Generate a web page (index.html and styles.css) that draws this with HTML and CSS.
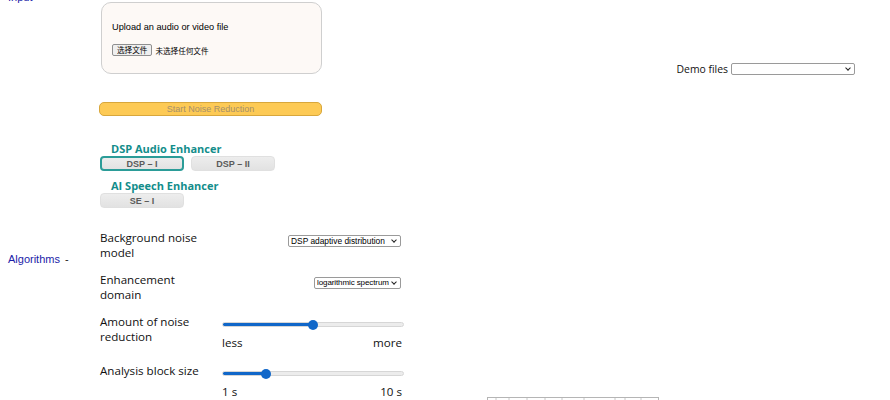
FILE: index.html
```html
<!DOCTYPE html>
<html lang="en">
<head>
    <meta charset="UTF-8">
    <meta name="viewport" content="width=device-width, initial-scale=1.0">
    <title>Noise Reduction</title>
    <link rel="stylesheet" href="styles.css">
</head>
<body>
    <div class="page">
        <div class="section input-section">
            <div class="side">Input</div>
            <div class="main">
                <div class="upload-box">
                    <p class="upload-title">Upload an audio or video file</p>
                    <div class="file-row">
                        <button class="file-btn">选择文件</button>
                        <span class="file-name">未选择任何文件</span>
                    </div>
                </div>
                <button class="start-btn" disabled>Start Noise Reduction</button>
            </div>
            <div class="aside demo">
                <label for="demo">Demo files</label>
                <span class="select-wrap">
                    <select id="demo" class="demo-select">
                        <option value=""></option>
                    </select>
                </span>
            </div>
        </div>

        <div class="section algo-section">
            <div class="side algo-label">Algorithms <span class="dash">-</span></div>
            <div class="main">
                <div class="algo-group">
                    <h3>DSP Audio Enhancer</h3>
                    <div class="algo-buttons">
                        <button class="algo-btn active">DSP – I</button>
                        <button class="algo-btn">DSP – II</button>
                    </div>
                </div>
                <div class="algo-group">
                    <h3>AI Speech Enhancer</h3>
                    <div class="algo-buttons">
                        <button class="algo-btn">SE – I</button>
                    </div>
                </div>

                <div class="settings">
                    <div class="setting">
                        <div class="setting-label">Background noise model</div>
                        <div class="setting-control">
                            <span class="select-wrap">
                                <select class="small-select">
                                    <option>DSP adaptive distribution</option>
                                </select>
                            </span>
                        </div>
                    </div>
                    <div class="setting">
                        <div class="setting-label">Enhancement domain</div>
                        <div class="setting-control">
                            <span class="select-wrap">
                                <select class="small-select narrow">
                                    <option>logarithmic spectrum</option>
                                </select>
                            </span>
                        </div>
                    </div>
                    <div class="setting">
                        <div class="setting-label">Amount of noise reduction</div>
                        <div class="setting-control slider-control">
                            <input type="range" class="slider" min="0" max="100" value="50" style="--fill: 50%">
                            <div class="slider-ends"><span>less</span><span>more</span></div>
                        </div>
                    </div>
                    <div class="setting">
                        <div class="setting-label">Analysis block size</div>
                        <div class="setting-control slider-control">
                            <input type="range" class="slider" min="1" max="10" value="3" style="--fill: 23%">
                            <div class="slider-ends"><span>1 s</span><span>10 s</span></div>
                        </div>
                    </div>
                </div>
            </div>
            <div class="aside">
                <svg class="chart" width="172" height="40" viewBox="0 0 172 40">
                    <rect x="0.5" y="0.5" width="171" height="39" fill="#fff" stroke="#b5b5b5"/>
                    <g stroke="#c8c8c8">
                        <line x1="9" y1="1" x2="9" y2="3"/>
                        <line x1="22" y1="1" x2="22" y2="3"/>
                        <line x1="40" y1="1" x2="40" y2="3"/>
                        <line x1="58" y1="1" x2="58" y2="3"/>
                        <line x1="75" y1="1" x2="75" y2="3"/>
                        <line x1="97" y1="1" x2="97" y2="3"/>
                        <line x1="128" y1="1" x2="128" y2="3"/>
                        <line x1="138" y1="1" x2="138" y2="3"/>
                        <line x1="154" y1="1" x2="154" y2="3"/>
                    </g>
                </svg>
            </div>
        </div>
    </div>
</body>
</html>
```

FILE: styles.css
```css
body {
    margin: 0;
    font-family: "Liberation Sans", Arial, sans-serif;
    background-color: #fff;
    color: #000;
    overflow: hidden;
}

.page {
    margin-top: -12px;
}

.section {
    display: flex;
}

.side {
    width: 100px;
    padding-left: 8px;
    box-sizing: border-box;
    color: #1c1ca8;
    font-size: 11px;
    line-height: 13px;
    padding-top: 3px;
}

.main {
    width: 304px;
}

.aside {
    flex: 1;
}

/* input */

.upload-box {
    margin: 14px 0 0 1px;
    width: 221px;
    height: 72px;
    box-sizing: border-box;
    border: 1px solid #cfcfcf;
    border-radius: 10px;
    background-color: #fdf9f6;
    padding: 19px 10px 0 10px;
}

.upload-title {
    margin: 0;
    font-size: 9.2px;
    line-height: 11px;
}

.file-row {
    display: flex;
    align-items: center;
    margin-top: 11px;
    font-family: "Noto Sans CJK SC", sans-serif;
    font-size: 7.6px;
}

.file-btn {
    font-family: "Noto Sans CJK SC", sans-serif;
    font-size: 7.6px;
    height: 12px;
    line-height: 10px;
    padding: 0 4px;
    border: 1px solid #8f8f8f;
    border-radius: 2px;
    background-color: #efefef;
    color: #000;
    margin-right: 3px;
}

.start-btn {
    display: block;
    margin: 28px 0 0 -1px;
    width: 223px;
    height: 14px;
    padding: 0;
    border: 1px solid #d8a73c;
    border-radius: 5px;
    background-color: #fdca55;
    color: #a6906a;
    font-family: "Liberation Sans", Arial, sans-serif;
    font-size: 9px;
    line-height: 12px;
}

.demo {
    display: flex;
    justify-content: flex-end;
    align-items: center;
    padding: 74px 35px 0 0;
    align-self: flex-start;
    font-family: "Open Sans", sans-serif;
    font-size: 10.4px;
}

.demo label {
    margin-right: 3px;
    color: #111;
}

/* selects with a thin chevron */

.select-wrap {
    position: relative;
    display: inline-block;
    line-height: 0;
}

.select-wrap::after {
    content: "";
    position: absolute;
    right: 5px;
    top: 3px;
    width: 3px;
    height: 3px;
    border-right: 1.2px solid #222;
    border-bottom: 1.2px solid #222;
    transform: rotate(45deg);
    pointer-events: none;
}

.demo-select,
.small-select {
    -webkit-appearance: none;
    appearance: none;
    height: 12px;
    font-family: "Liberation Sans", Arial, sans-serif;
    font-size: 8.4px;
    line-height: 10px;
    padding: 0 14px 0 2px;
    border: 1px solid #9a9a9a;
    border-radius: 2px;
    background-color: #fff;
    color: #000;
}

.small-select.narrow {
    font-size: 8px;
    letter-spacing: -0.1px;
    padding-right: 11px;
}

.demo-select {
    width: 124px;
}

/* algorithms */

.algo-label {
    padding-top: 137px;
}

.algo-label .dash {
    margin-left: 2px;
    color: #222;
}

.algo-group {
    margin-top: 8px;
}

.algo-section .main > .algo-group:first-child {
    margin-top: 26px;
}

.algo-group h3 {
    margin: 0 0 0 11px;
    font-family: "Open Sans", sans-serif;
    font-weight: 700;
    font-size: 11px;
    line-height: 13px;
    color: #138d8b;
}

.algo-buttons {
    display: flex;
    gap: 7px;
    margin-top: 1px;
}

.algo-btn {
    width: 84px;
    height: 15px;
    padding: 0;
    border: 1px solid #e0e0e0;
    border-radius: 4px;
    background: linear-gradient(#ededed, #e2e2e2);
    color: #5a5a5a;
    font-family: "Liberation Sans", Arial, sans-serif;
    font-weight: 700;
    font-size: 9px;
}

.algo-btn.active {
    border: 2px solid #2b9c98;
}

.settings {
    margin-top: 22px;
    display: flex;
    flex-direction: column;
    gap: 12px;
}

.setting {
    display: flex;
}

.setting-label {
    width: 122px;
    padding-right: 10px;
    box-sizing: border-box;
    font-family: "Open Sans", sans-serif;
    font-size: 11.6px;
    line-height: 15px;
    color: #111;
}

.setting-control {
    width: 182px;
    display: flex;
    justify-content: flex-end;
    align-items: flex-start;
    padding: 5px 3px 0 0;
    box-sizing: border-box;
}

.slider-control {
    flex-direction: column;
    align-items: stretch;
    padding: 0;
}

.slider {
    -webkit-appearance: none;
    appearance: none;
    width: 100%;
    height: 5px;
    margin: 8px 0 0 0;
    border-radius: 3px;
    border: 1px solid #d6d6d6;
    box-sizing: border-box;
    background: linear-gradient(to right, #1067c9 var(--fill), #ececec var(--fill));
}

.slider::-webkit-slider-thumb {
    -webkit-appearance: none;
    width: 10px;
    height: 10px;
    border-radius: 50%;
    background-color: #1067c9;
    border: none;
}

.slider-ends {
    display: flex;
    justify-content: space-between;
    margin-top: 8px;
    padding-right: 2px;
    font-family: "Open Sans", sans-serif;
    font-size: 11.6px;
    line-height: 15px;
    color: #111;
}

.setting:last-child {
    margin-top: 1px;
}

.chart {
    display: block;
    margin: 281px 0 0 83px;
}
```
